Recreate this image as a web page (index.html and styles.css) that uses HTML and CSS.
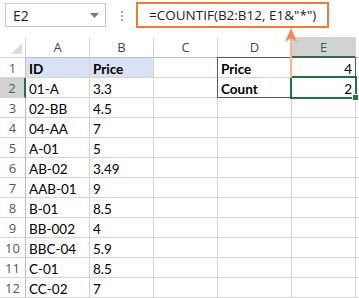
FILE: index.html
```html
<!DOCTYPE html>
<html>
<head>
<meta charset="utf-8">
<link rel="stylesheet" href="styles.css">
</head>
<body>
<div class="sheet">
  <div class="fbar">
    <div class="namebox"><span>E2</span><svg class="caret" width="9" height="5" viewBox="0 0 9 5"><path d="M0 0H9L4.5 5Z" fill="#7a7a7a"/></svg></div>
    <div class="dots"><i></i><i></i><i></i></div>
    <div class="formula">=COUNTIF(B2:B12, E1&amp;"*")</div>
  </div>
  <div class="grid">
    <div class="corner"><svg width="11" height="11" viewBox="0 0 11 11"><path d="M11 0V11H0Z" fill="#dcdcdc"/></svg></div>
    <div class="ch">A</div><div class="ch">B</div><div class="ch">C</div><div class="ch">D</div><div class="ch selcol">E</div><div class="ch end"></div>

    <div class="rh">1</div><div class="c hd b">ID</div><div class="c hd b">Price</div><div class="c"></div><div class="c b">Price</div><div class="c r">4</div><div class="c end"></div>
    <div class="rh selrow">2</div><div class="c">01-A</div><div class="c">3.3</div><div class="c"></div><div class="c b">Count</div><div class="c r">2</div><div class="c end"></div>
    <div class="rh">3</div><div class="c">02-BB</div><div class="c">4.5</div><div class="c"></div><div class="c"></div><div class="c"></div><div class="c end"></div>
    <div class="rh">4</div><div class="c">04-AA</div><div class="c">7</div><div class="c"></div><div class="c"></div><div class="c"></div><div class="c end"></div>
    <div class="rh">5</div><div class="c">A-01</div><div class="c">5</div><div class="c"></div><div class="c"></div><div class="c"></div><div class="c end"></div>
    <div class="rh">6</div><div class="c">AB-02</div><div class="c">3.49</div><div class="c"></div><div class="c"></div><div class="c"></div><div class="c end"></div>
    <div class="rh">7</div><div class="c">AAB-01</div><div class="c">9</div><div class="c"></div><div class="c"></div><div class="c"></div><div class="c end"></div>
    <div class="rh">8</div><div class="c">B-01</div><div class="c">8.5</div><div class="c"></div><div class="c"></div><div class="c"></div><div class="c end"></div>
    <div class="rh">9</div><div class="c">BB-002</div><div class="c">4</div><div class="c"></div><div class="c"></div><div class="c"></div><div class="c end"></div>
    <div class="rh">10</div><div class="c">BBC-04</div><div class="c">5.9</div><div class="c"></div><div class="c"></div><div class="c"></div><div class="c end"></div>
    <div class="rh">11</div><div class="c">C-01</div><div class="c">8.5</div><div class="c"></div><div class="c"></div><div class="c"></div><div class="c end"></div>
    <div class="rh">12</div><div class="c">CC-02</div><div class="c">7</div><div class="c"></div><div class="c"></div><div class="c"></div><div class="c end"></div>
  </div>
  <div class="range"></div>
  <div class="selbox"><i class="handle"></i></div>
  <svg class="arrow" width="14" height="50" viewBox="0 0 14 50">
    <path d="M7 10V50" stroke="#f5b58f" stroke-width="2"/>
    <path d="M7 0L13 14L7 10L1 14Z" fill="#f28a4f"/>
  </svg>
</div>
</body>
</html>
```
FILE: styles.css
```css
html, body {
  margin: 0;
  padding: 0;
  background: #fff;
}
.sheet {
  position: relative;
  width: 359px;
  height: 298px;
  overflow: hidden;
  background: #fff;
}
.fbar {
  height: 37px;
  box-sizing: border-box;
  display: flex;
  align-items: flex-start;
  padding-left: 5px;
  padding-top: 2px;
  font-family: "Open Sans", sans-serif;
  color: #222;
}
.namebox {
  margin-top: 1px;
  width: 101px;
  height: 24px;
  box-sizing: border-box;
  border: 1px solid #c6c6c6;
  display: flex;
  align-items: center;
  justify-content: space-between;
  padding: 0 6px 0 7px;
  font-size: 14px;
}
.dots {
  width: 3px;
  margin-left: 15px;
  margin-top: 9px;
  display: flex;
  flex-direction: column;
  gap: 2px;
}
.dots i {
  display: block;
  width: 2px;
  height: 2px;
  background: #a8a8a8;
}
.formula {
  margin-left: 12px;
  width: 193px;
  height: 26px;
  box-sizing: border-box;
  border: 2px solid #ed7d31;
  font-size: 13.5px;
  line-height: 22px;
  padding-left: 11px;
  white-space: nowrap;
}
.grid {
  display: grid;
  grid-template-columns: 26px 64px 64px 64px 74px 64px 3px;
  grid-template-rows: 21px repeat(12, 20px);
  font-family: "Lato", sans-serif;
  font-size: 13.5px;
  color: #000;
}
.grid > div {
  box-sizing: border-box;
  border-right: 1px solid #d4d4d4;
  border-bottom: 1px solid #d4d4d4;
  display: flex;
  align-items: center;
  white-space: nowrap;
  overflow: hidden;
}
.corner {
  justify-content: flex-end;
  align-items: flex-end !important;
  padding: 0 3px 3px 0;
}
.ch {
  justify-content: center;
  font-family: "Open Sans", sans-serif;
  font-size: 13px;
  color: #444;
  border-bottom-color: #bfbfbf !important;
}
.ch.selcol {
  background: #d2d2d2;
  color: #217346;
  border-bottom: 2px solid #217346 !important;
}
.rh {
  justify-content: center;
  font-family: "Open Sans", sans-serif;
  font-size: 13px;
  color: #555;
  border-right-color: #bfbfbf !important;
}
.rh.selrow {
  background: #d2d2d2;
  color: #217346;
  border-right: 2px solid #217346 !important;
}
.c {
  padding: 2px 3px 0 3px;
}
.c.hd {
  background: #d9e1f2;
}
.c.b {
  font-weight: bold;
}
.c.r {
  justify-content: flex-end;
}
.grid > .end {
  border-right: none;
}
.range {
  position: absolute;
  left: 217px;
  top: 57px;
  width: 139px;
  height: 41px;
  box-sizing: border-box;
  border: 1px solid #595959;
  pointer-events: none;
}
.selbox {
  position: absolute;
  left: 290px;
  top: 76px;
  width: 67px;
  height: 23px;
  box-sizing: border-box;
  border: 2px solid #217346;
}
.handle {
  position: absolute;
  right: -4px;
  bottom: -4px;
  width: 5px;
  height: 5px;
  background: #217346;
  border: 1px solid #fff;
}
.arrow {
  position: absolute;
  left: 284px;
  top: 28px;
}
```
